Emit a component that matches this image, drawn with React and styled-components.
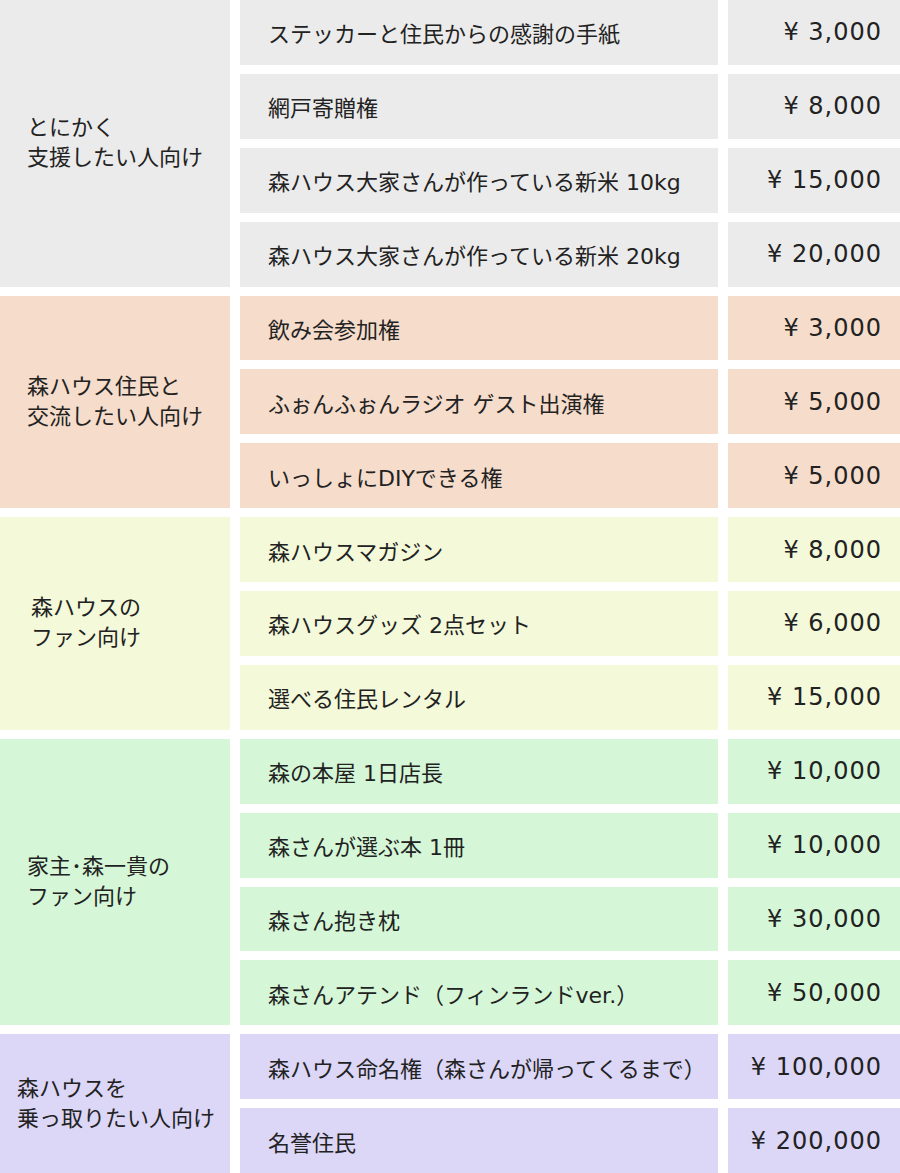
import React from "react";
import styled, { createGlobalStyle } from "styled-components";

const Global = createGlobalStyle`
  html, body { margin: 0; padding: 0; background: #fff; }
  body { font-family: "DejaVu Sans", "Noto Sans CJK JP", sans-serif; color: #222; }
`;

const groups = [
  {
    title: ["とにかく", "支援したい人向け"],
    bg: "#ebebeb",
    items: [
      ["ステッカーと住民からの感謝の手紙", "3,000"],
      ["網戸寄贈権", "8,000"],
      ["森ハウス大家さんが作っている新米 10kg", "15,000"],
      ["森ハウス大家さんが作っている新米 20kg", "20,000"],
    ],
  },
  {
    title: ["森ハウス住民と", "交流したい人向け"],
    bg: "#f5dccb",
    items: [
      ["飲み会参加権", "3,000"],
      ["ふぉんふぉんラジオ ゲスト出演権", "5,000"],
      ["いっしょにDIYできる権", "5,000"],
    ],
  },
  {
    title: ["森ハウスの", "ファン向け"],
    bg: "#f3f9d9",
    pad: 31,
    items: [
      ["森ハウスマガジン", "8,000"],
      ["森ハウスグッズ 2点セット", "6,000"],
      ["選べる住民レンタル", "15,000"],
    ],
  },
  {
    title: ["家主･森一貴の", "ファン向け"],
    bg: "#d5f7d7",
    items: [
      ["森の本屋 1日店長", "10,000"],
      ["森さんが選ぶ本 1冊", "10,000"],
      ["森さん抱き枕", "30,000"],
      ["森さんアテンド（フィンランドver.）", "50,000"],
    ],
  },
  {
    title: ["森ハウスを", "乗っ取りたい人向け"],
    bg: "#dcd6f7",
    pad: 17,
    items: [
      ["森ハウス命名権（森さんが帰ってくるまで）", "100,000"],
      ["名誉住民", "200,000"],
    ],
  },
];

const Table = styled.div`
  display: grid;
  grid-template-columns: 230px 478px 1fr;
  grid-template-rows: repeat(16, 1fr);
  column-gap: 10px;
  row-gap: 9px;
  width: 900px;
  height: 1173px;
`;

const Category = styled.div`
  grid-column: 1;
  grid-row: span ${(p) => p.$span};
  background: ${(p) => p.$bg};
  display: flex;
  flex-direction: column;
  justify-content: center;
  padding-left: ${(p) => p.$pad}px;
  font-size: 22px;
  line-height: 30px;
`;

const Item = styled.div`
  grid-column: 2;
  background: ${(p) => p.$bg};
  display: flex;
  align-items: center;
  padding-left: 28px;
  font-size: 22px;
  white-space: nowrap;
`;

const Price = styled.div`
  grid-column: 3;
  background: ${(p) => p.$bg};
  display: flex;
  align-items: center;
  justify-content: flex-end;
  padding-right: 18px;
  font-size: 24px;
  letter-spacing: 1px;
  white-space: nowrap;
`;

export default function App() {
  return (
    <>
      <Global />
      <Table>
        {groups.map((g, gi) => (
          <React.Fragment key={gi}>
            <Category $span={g.items.length} $bg={g.bg} $pad={g.pad ?? 27}>
              {g.title.map((t, i) => (
                <div key={i}>{t}</div>
              ))}
            </Category>
            {g.items.map(([name, price], i) => (
              <React.Fragment key={i}>
                <Item $bg={g.bg}>{name}</Item>
                <Price $bg={g.bg}>¥ {price}</Price>
              </React.Fragment>
            ))}
          </React.Fragment>
        ))}
      </Table>
    </>
  );
}
